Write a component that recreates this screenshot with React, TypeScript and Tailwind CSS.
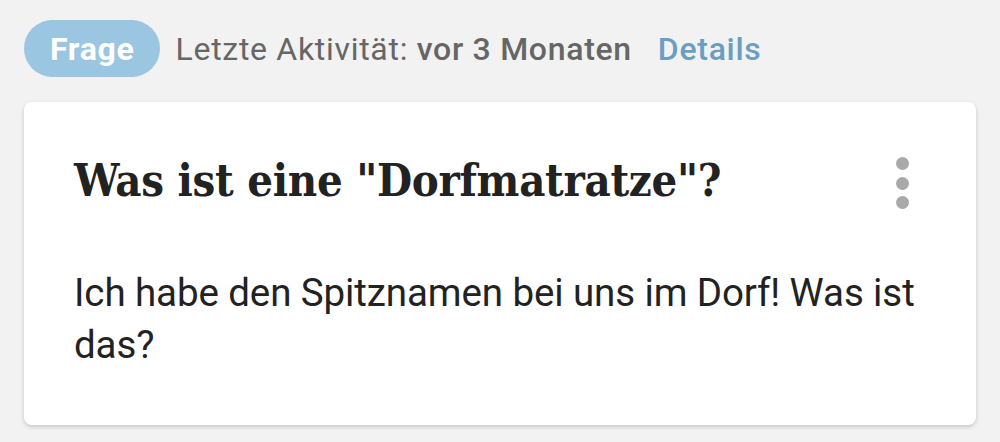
export default function App() {
  return (
    <div className="min-h-screen bg-[#f2f2f2] px-6 pt-5 font-['Roboto',sans-serif]">
      {/* meta row */}
      <div className="flex h-[57px] items-center text-[32px] tracking-[0.7px]">
        <span className="flex h-[57px] items-center rounded-full bg-[#9ac6e2] pl-[26px] pr-[25px] font-bold text-white">
          Frage
        </span>
        <span className="ml-[16px] text-[#666666]">
          Letzte Aktivität: <span className="font-medium">vor 3 Monaten</span>
        </span>
        <a className="ml-[26px] font-medium text-[#6a9ec2]">Details</a>
      </div>

      {/* question card */}
      <div className="mt-[25px] h-[323px] rounded-lg bg-white px-[50px] shadow-[0_2px_4px_rgba(0,0,0,0.18)]">
        <div className="flex items-start justify-between pt-[53px]">
          <h1 className="font-['DejaVu_Serif',serif] text-[45px] leading-[52px] font-bold tracking-[-0.3px] text-[#222222] [font-stretch:condensed]">
            Was ist eine "Dorfmatratze"?
          </h1>
          <div className="mr-[17px] mt-[2px] flex flex-col gap-[6.5px]">
            <span className="h-[13px] w-[13px] rounded-full bg-[#a9a9a9]" />
            <span className="h-[13px] w-[13px] rounded-full bg-[#a9a9a9]" />
            <span className="h-[13px] w-[13px] rounded-full bg-[#a9a9a9]" />
          </div>
        </div>
        <p className="-mr-6 mt-[58px] text-[38.5px] leading-[52px] tracking-[-0.1px] text-[#222222]">
          Ich habe den Spitznamen bei uns im Dorf! Was ist das?
        </p>
      </div>
    </div>
  )
}
